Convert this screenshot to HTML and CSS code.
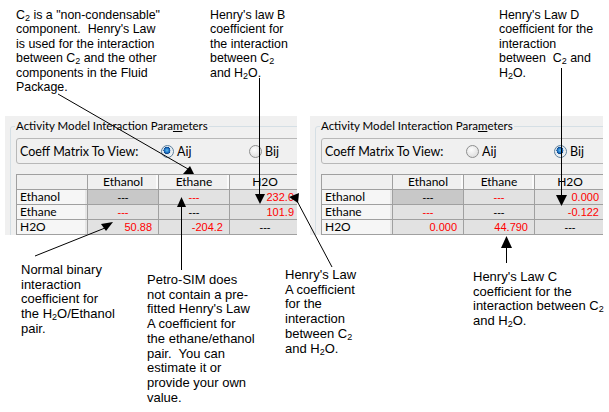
FILE: index.html
```html
<!DOCTYPE html>
<html lang="en">
<head>
    <meta charset="UTF-8">
    <meta name="viewport" content="width=device-width, initial-scale=1.0">
    <title>Activity Model Interaction Parameters</title>
    <link rel="stylesheet" href="styles.css">
</head>
<body>
    <div class="sheet">
        <div class="notes-top">
            <p class="note n-c2">C<sub>2</sub> is a "non-condensable"<br>component.&nbsp; Henry's Law<br>is used for the interaction<br>between C<sub>2</sub> and the other<br>components in the Fluid<br>Package.</p>
            <p class="note n-b">Henry's law B<br>coefficient for<br>the interaction<br>between C<sub>2</sub><br>and H<sub>2</sub>O.</p>
            <p class="note n-d">Henry's Law D<br>coefficient for the<br>interaction<br>between&nbsp; C<sub>2</sub> and<br>H<sub>2</sub>O.</p>
        </div>

        <div class="panels">
            <div class="panel">
                <fieldset class="group">
                    <legend>Activity Model Interaction Para<u>m</u>eters</legend>
                    <div class="coeff">
                        <span class="coeff-label">Coeff Matrix To View:</span>
                        <span class="option"><span class="radio on"></span>Aij</span>
                        <span class="option"><span class="radio"></span>Bij</span>
                    </div>
                    <table class="matrix">
                        <tr>
                            <th class="corner"></th>
                            <th>Ethanol</th>
                            <th>Ethane</th>
                            <th>H2O</th>
                        </tr>
                        <tr>
                            <th class="row-name">Ethanol</th>
                            <td class="dash selected">---</td>
                            <td class="dash red">---</td>
                            <td class="num red">232.0</td>
                        </tr>
                        <tr>
                            <th class="row-name">Ethane</th>
                            <td class="dash red">---</td>
                            <td class="dash">---</td>
                            <td class="num red">101.9</td>
                        </tr>
                        <tr>
                            <th class="row-name">H2O</th>
                            <td class="num red">50.88</td>
                            <td class="num red">-204.2</td>
                            <td class="dash">---</td>
                        </tr>
                    </table>
                </fieldset>
            </div>
            <div class="panel panel-right">
                <fieldset class="group">
                    <legend>Activity Model Interaction Para<u>m</u>eters</legend>
                    <div class="coeff">
                        <span class="coeff-label">Coeff Matrix To View:</span>
                        <span class="option"><span class="radio"></span>Aij</span>
                        <span class="option"><span class="radio on"></span>Bij</span>
                    </div>
                    <table class="matrix">
                        <tr>
                            <th class="corner"></th>
                            <th>Ethanol</th>
                            <th>Ethane</th>
                            <th>H2O</th>
                        </tr>
                        <tr>
                            <th class="row-name">Ethanol</th>
                            <td class="dash selected">---</td>
                            <td class="dash red">---</td>
                            <td class="num red">0.000</td>
                        </tr>
                        <tr>
                            <th class="row-name">Ethane</th>
                            <td class="dash red">---</td>
                            <td class="dash">---</td>
                            <td class="num red">-0.122</td>
                        </tr>
                        <tr>
                            <th class="row-name">H2O</th>
                            <td class="num red">0.000</td>
                            <td class="num red">44.790</td>
                            <td class="dash">---</td>
                        </tr>
                    </table>
                </fieldset>
            </div>
        </div>

        <div class="notes-bottom">
            <p class="note n-normal">Normal binary<br>interaction<br>coefficient for<br>the H<sub>2</sub>O/Ethanol<br>pair.</p>
            <p class="note n-petro">Petro-SIM does<br>not contain a pre-<br>fitted Henry's Law<br>A coefficient for<br>the ethane/ethanol<br>pair.&nbsp; You can<br>estimate it or<br>provide your own<br>value.</p>
            <p class="note n-a">Henry's Law<br>A coefficient<br>for the<br>interaction<br>between C<sub>2</sub><br>and H<sub>2</sub>O.</p>
            <p class="note n-c">Henry's Law C<br>coefficient for the<br>interaction between C<sub>2</sub><br>and H<sub>2</sub>O.</p>
        </div>

        <!-- callout arrows -->
        <svg class="arrows" width="609" height="412" viewBox="0 0 609 412">
            <g stroke="#000" stroke-width="1" fill="none">
                <line x1="58" y1="94" x2="188" y2="169" />
                <line x1="259.5" y1="78" x2="259.5" y2="196" />
                <line x1="296" y1="199" x2="332" y2="267" />
                <line x1="35" y1="256" x2="105" y2="228" />
                <line x1="181.5" y1="270" x2="181.5" y2="205" />
                <line x1="561.5" y1="68" x2="561.5" y2="197" />
                <line x1="506.5" y1="263" x2="506.5" y2="246" />
            </g>
            <g fill="#000">
                <polygon points="183,174 194,174 190,166" />
                <polygon points="255,194 265,194 260,204" />
                <polygon points="289,197 299,193 298,203" />
                <polygon points="113,222 101,224 106,231" />
                <polygon points="177,207 186,207 181.5,197" />
                <polygon points="556,195 567,195 561.5,206" />
                <polygon points="501,248 512,248 506.5,236" />
            </g>
        </svg>
    </div>
</body>
</html>
```

FILE: styles.css
```css
body {
    margin: 0;
    background: #fff;
    color: #000;
    font-family: "Liberation Sans", Arial, sans-serif;
}
.sheet {
    position: relative;
    width: 609px;
    height: 412px;
    overflow: hidden;
}
.note {
    margin: 0;
    white-space: nowrap;
}
.note sub {
    font-size: 9px;
    line-height: 0;
    vertical-align: -2px;
}
/* notes above the panels */
.notes-top {
    display: flex;
    height: 116px;
    box-sizing: border-box;
    padding: 8px 0 0 16px;
    font-size: 12.4px;
    line-height: 14.4px;
}
.n-c2 {
    width: 194px;
}
.n-b {
    width: 289px;
}
/* the two dialog panels */
.panels {
    display: flex;
    gap: 13px;
    height: 119px;
    padding-left: 5px;
}
.panel {
    width: 292px;
    background: #f0f0f0;
    overflow: hidden;
    font-family: Lato, "Liberation Sans", sans-serif;
    font-size: 12px;
}
.panel-right {
    width: 293px;
}
.group {
    width: 400px;
    height: 200px;
    min-width: 0;
    margin: 3px 0 0 5px;
    padding: 5px 0 0 4px;
    border: 1px solid #d5dfe5;
    border-radius: 3px;
}
.group>legend {
    padding: 0 1px;
    font-size: 11.5px;
    line-height: 14px;
}
.coeff {
    display: flex;
    align-items: center;
    height: 24px;
    margin-left: 1px;
    padding-left: 3px;
    border: 1px solid #b8b8b8;
    border-radius: 3px;
    font-size: 12.5px;
}
.coeff-label {
    width: 141px;
}
.option {
    display: flex;
    align-items: center;
    gap: 3px;
    width: 88px;
}
.radio {
    width: 13px;
    height: 13px;
    box-sizing: border-box;
    border: 1px solid #8e8f8f;
    border-radius: 50%;
    background: radial-gradient(circle at 40% 35%, #fdfdfd, #d6d6d6);
}
.radio.on {
    border-color: #5c7f9c;
    background: radial-gradient(circle at 45% 40%, #5fc0f5 0, #1565b8 2.6px, #0c3f80 3.4px, #d8e4ee 3.6px, #f4f4f4 6px);
}
/* coefficient matrix */
.matrix {
    width: 281px;
    margin: 10px 0 0 1px;
    border-collapse: collapse;
    table-layout: fixed;
}
.matrix th,
.matrix td {
    width: 70px;
    height: 14px;
    padding: 0;
    border: 1px solid #a0a0a0;
    line-height: 14px;
    white-space: nowrap;
    overflow: hidden;
}
.matrix th {
    background: #f0f0f0;
    font-weight: normal;
    font-size: 12px;
    box-shadow: inset -2px 0 0 #fbfbfb;
}
.matrix th.corner {
    box-shadow: none;
}
.matrix th.row-name {
    text-align: left;
    padding-left: 3px;
    background: #f6f6f6;
    box-shadow: inset -2px 0 0 #e6e6e6;
}
.matrix td {
    background: #e2e2e2;
    font-family: "Liberation Sans", Arial, sans-serif;
    font-size: 11px;
}
.matrix td.selected {
    background: #c8c8c8;
}
.matrix .dash {
    text-align: center;
}
.matrix .num {
    text-align: right;
    padding-right: 6px;
}
.matrix .red {
    color: #ff0000;
}
/* notes below the panels */
.notes-bottom {
    display: flex;
    align-items: flex-start;
    padding-left: 21px;
    font-size: 13px;
    line-height: 14.7px;
}
.n-normal {
    width: 126px;
    margin-top: 28px;
}
.n-petro {
    width: 138px;
    margin-top: 38px;
}
.n-a {
    width: 188px;
    margin-top: 33px;
}
.n-c {
    margin-top: 35px;
}
.arrows {
    position: absolute;
    top: 0;
    left: 0;
    pointer-events: none;
}
```
